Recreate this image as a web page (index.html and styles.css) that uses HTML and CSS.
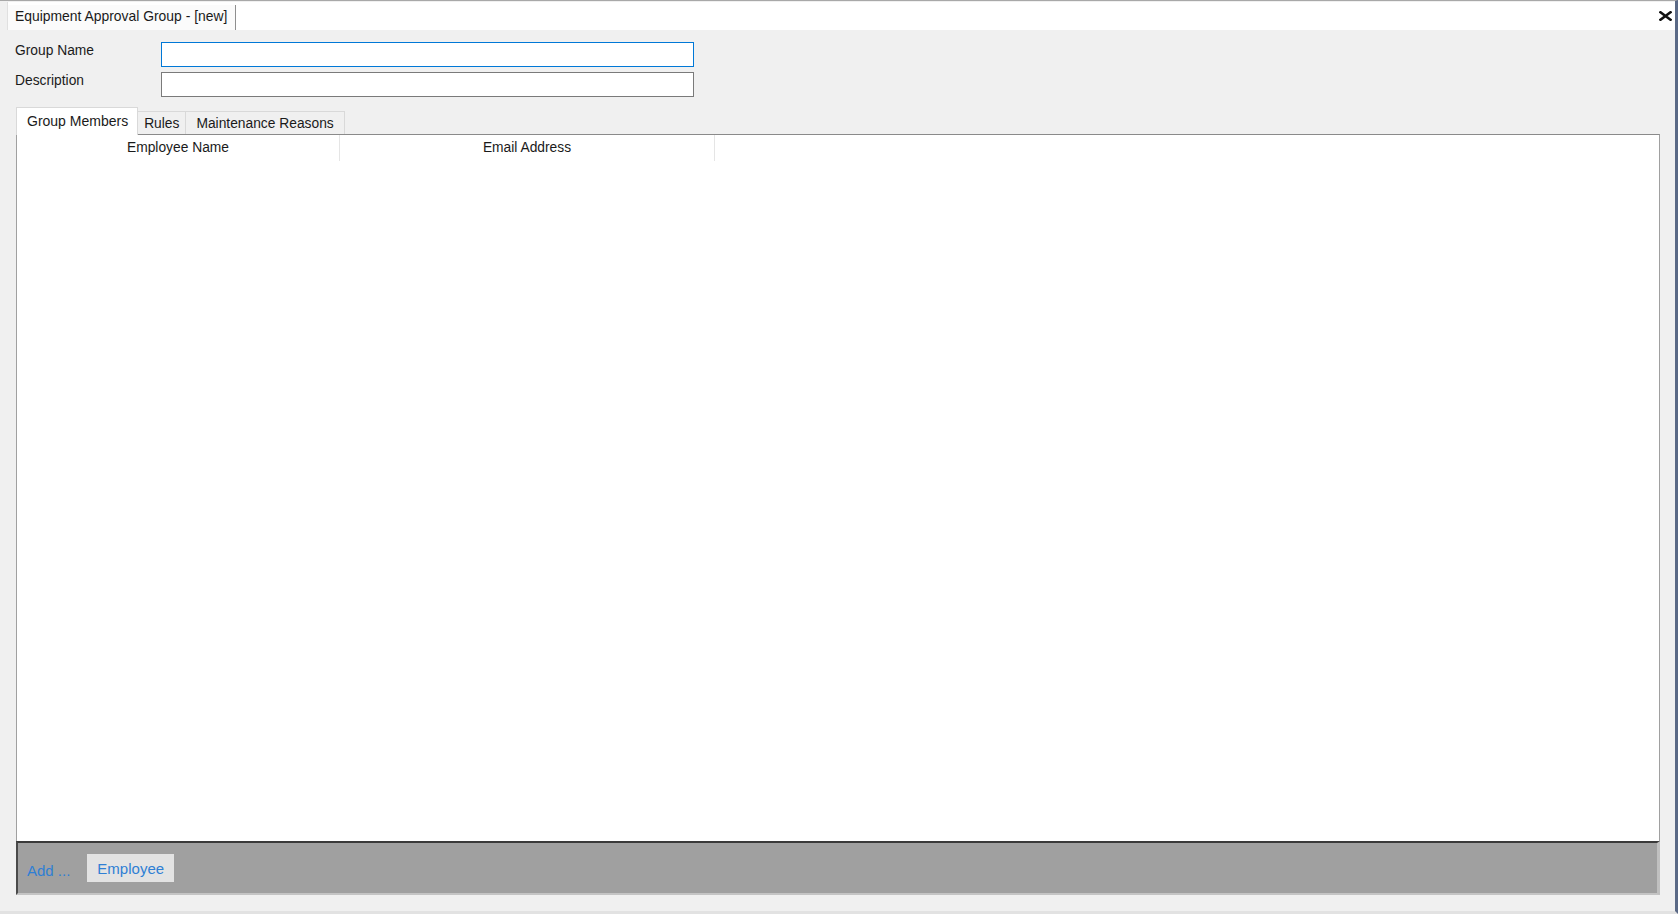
FILE: index.html
```html
<!DOCTYPE html>
<html lang="en">
<head>
<meta charset="utf-8">
<title>Equipment Approval Group - [new]</title>
<link rel="stylesheet" href="styles.css">
</head>
<body>
<div class="window">
  <div class="titlebar">
    <div class="doc-tab">Equipment Approval Group - [new]</div>
    <div class="close" title="Close">
      <svg width="13" height="10" viewBox="0 0 13 10"><path d="M1.5 1.2 L11.5 8.8 M11.5 1.2 L1.5 8.8" stroke="#111" stroke-width="2.5" stroke-linecap="square" fill="none"/></svg>
    </div>
  </div>
  <div class="form">
    <div class="form-row">
      <label class="form-label">Group Name</label>
      <input class="field field-focus" type="text">
    </div>
    <div class="form-row">
      <label class="form-label">Description</label>
      <input class="field" type="text">
    </div>
  </div>
  <div class="tabs">
    <div class="tab tab-active">Group Members</div>
    <div class="tab tab-rules">Rules</div>
    <div class="tab">Maintenance Reasons</div>
  </div>
  <div class="panel">
    <div class="grid">
      <div class="grid-header">
        <div class="col col-name">Employee Name</div>
        <div class="col col-email">Email Address</div>
      </div>
      <div class="grid-body"></div>
    </div>
    <div class="actionbar">
      <span class="add-label">Add ...</span>
      <button class="add-btn" type="button">Employee</button>
    </div>
  </div>
</div>
</body>
</html>
```
FILE: styles.css
```css
* { box-sizing: border-box; }
html, body {
  margin: 0;
  padding: 0;
  background: #f0f0f0;
}
body {
  font-family: "Liberation Sans", Arial, sans-serif;
  font-size: 13.6px;
  color: #1a1a1a;
  overflow: hidden;
}
.window {
  width: 1678px;
  height: 914px;
  display: flex;
  flex-direction: column;
  background: #f0f0f0;
  border-top: 1px solid #a8a8a8;
  border-right: 3px solid #5a6986;
  border-bottom: 3px solid #e2e2e2;
}
.titlebar {
  height: 28px;
  margin-left: 7px;
  margin-top: 1px;
  background: #ffffff;
  display: flex;
  align-items: stretch;
  justify-content: space-between;
  border-left: 1px solid #e0e0e0;
}
.doc-tab {
  width: 228px;
  padding-left: 7px;
  display: flex;
  align-items: center;
  background: #fbfbfb;
  border-right: 1px solid #8f8f8f;
  margin-top: 3px;
  padding-bottom: 3px;
  color: #1a1a1a;
  font-size: 13.9px;
}
.close {
  display: flex;
  align-items: flex-start;
  padding-top: 9px;
  padding-right: 3px;
}
.form {
  padding: 12px 0 0 15px;
  display: flex;
  flex-direction: column;
  gap: 5px;
}
.form-row {
  display: flex;
  align-items: flex-start;
}
.form-label {
  width: 146px;
  padding-top: 1px;
  line-height: 16px;
  font-size: 13.8px;
}
.field {
  width: 533px;
  height: 25px;
  margin: 0;
  border: 1px solid #7a7a7a;
  background: #ffffff;
  outline: none;
  font: inherit;
}
.field-focus {
  border-color: #0078d7;
}
.tabs {
  display: flex;
  align-items: flex-end;
  margin-top: 10px;
  padding-left: 16px;
  height: 27px;
}
.tab {
  height: 23px;
  padding: 0 10px;
  display: flex;
  align-items: center;
  background: #f0f0f0;
  border: 1px solid #d9d9d9;
  border-bottom: none;
  border-left: none;
  font-size: 13.8px;
}
.tab-rules { padding: 0 6px; }
.tab-active {
  height: 28px;
  margin-bottom: -1px;
  padding: 0 9px 2px 10px;
  background: #ffffff;
  border: 1px solid #d9d9d9;
  border-bottom: none;
  position: relative;
  z-index: 1;
  font-size: 14px;
}
.panel {
  flex: 1;
  display: flex;
  flex-direction: column;
  margin: 0 15px 16px 16px;
}
.grid {
  flex: 1;
  background: #ffffff;
  border: 1px solid #a0a0a0;
  border-top-color: #8a8a8a;
  border-bottom: none;
  display: flex;
  flex-direction: column;
}
.grid-header {
  height: 26px;
  display: flex;
}
.col {
  display: flex;
  align-items: center;
  justify-content: center;
  border-right: 1px solid #e5e5e5;
  padding-bottom: 1px;
  font-size: 13.8px;
}
.col-name { width: 323px; }
.col-email { width: 375px; }
.grid-body { flex: 1; }
.actionbar {
  height: 54px;
  background: #a0a0a0;
  border-top: 2px solid #3a3a3a;
  border-left: 2px solid #4a4a4a;
  border-right: 3px solid #c0c0c0;
  border-bottom: 2px solid #c4c4c4;
  display: flex;
  align-items: center;
  padding-left: 9px;
  gap: 17px;
  font-size: 15px;
}
.add-label {
  color: #2f7fd4;
  padding-top: 5px;
}
.add-btn {
  height: 28px;
  padding: 0 10px;
  margin: 0;
  border: none;
  background: #e3e3e3;
  color: #2f7fd4;
  font: inherit;
  font-size: 15px;
  cursor: pointer;
}
```
